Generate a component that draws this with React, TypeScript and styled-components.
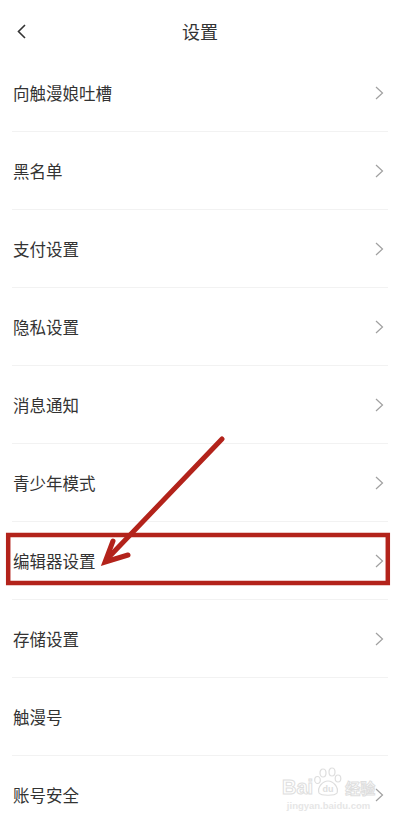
import React from 'react';
import styled, { createGlobalStyle } from 'styled-components';

const GlobalStyle = createGlobalStyle`
  html, body {
    margin: 0;
    padding: 0;
    background: #ffffff;
  }
  body {
    font-family: "Noto Sans CJK SC", "Noto Sans", sans-serif;
    -webkit-font-smoothing: antialiased;
  }
`;

const PageStyled = styled.div`
  position: relative;
  width: 400px;
  height: 824px;
  overflow: hidden;
  background: #ffffff;
`;

const Header = styled.header`
  height: 54px;
  display: grid;
  grid-template-columns: 60px 1fr 60px;
  align-items: start;
  padding-top: 18px;
  box-sizing: border-box;
  .back {
    display: flex;
    padding-left: 17px;
    height: 26px;
    align-items: center;
  }
  h1 {
    margin: 0;
    font-size: 18px;
    line-height: 26px;
    font-weight: 400;
    color: #333333;
    text-align: center;
  }
`;

const List = styled.ul`
  list-style: none;
  margin: 0;
  padding: 0;
`;

const Row = styled.li`
  height: 77px;
  margin: 0 12px;
  padding: 0 4px 0 1px;
  border-bottom: 1px solid #f2f2f2;
  display: flex;
  align-items: center;
  justify-content: space-between;
  span {
    font-size: 16.5px;
    color: #333333;
  }
`;

const Annotation = styled.svg`
  position: absolute;
  inset: 0;
  pointer-events: none;
`;

const Watermark = styled.div`
  position: absolute;
  left: 282px;
  top: 767px;
  display: flex;
  flex-direction: column;
  align-items: center;
  white-space: nowrap;
  .logo {
    display: flex;
    align-items: flex-end;
    font-family: "Liberation Sans", Arial, sans-serif;
    font-size: 20px;
    font-weight: 700;
    line-height: 20px;
    -webkit-text-stroke: 1px #dedede;
    color: #ffffff;
  }
  .cn {
    font-family: "Noto Sans CJK SC", sans-serif;
    font-size: 15px;
    line-height: 18px;
    margin-left: 2px;
  }
  .url {
    margin-top: 3px;
    font-family: "Liberation Sans", Arial, sans-serif;
    font-size: 9.5px;
    font-weight: 700;
    color: #e6e6e6;
  }
`;

const Chevron = () => (
  <svg width="9" height="14" viewBox="0 0 9 14">
    <path d="M1 1 L7.5 7 L1 13" fill="none" stroke="#a0a0a0" strokeWidth="1.2" />
  </svg>
);

const items = [
  { label: '向触漫娘吐槽', arrow: true },
  { label: '黑名单', arrow: true },
  { label: '支付设置', arrow: true },
  { label: '隐私设置', arrow: true },
  { label: '消息通知', arrow: true },
  { label: '青少年模式', arrow: true },
  { label: '编辑器设置', arrow: true },
  { label: '存储设置', arrow: true },
  { label: '触漫号', arrow: false },
  { label: '账号安全', arrow: true },
];

const App = () => {
  return (
    <PageStyled>
      <GlobalStyle />
      <Header>
        <div className="back">
          <svg width="10" height="15" viewBox="0 0 10 15">
            <path d="M8 1 L1.5 7.5 L8 14" fill="none" stroke="#333" strokeWidth="1.6" />
          </svg>
        </div>
        <h1>设置</h1>
        <div />
      </Header>
      <List>
        {items.map((item) => (
          <Row key={item.label}>
            <span>{item.label}</span>
            {item.arrow && <Chevron />}
          </Row>
        ))}
      </List>
      <Annotation width="400" height="824" viewBox="0 0 400 824">
        <rect x="8.2" y="535" width="379.6" height="48" fill="none" stroke="#b3231b" strokeWidth="4.5" />
        <line x1="222" y1="439" x2="108" y2="558" stroke="#b3231b" strokeWidth="5" strokeLinecap="round" />
        <path
          d="M113 541 L105 562 L128 555"
          fill="none"
          stroke="#b3231b"
          strokeWidth="5"
          strokeLinecap="round"
        />
      </Annotation>
      <Watermark>
        <div className="logo">
          <span>Bai</span>
          <svg width="30" height="30" viewBox="0 0 30 30">
            <g fill="none" stroke="#dedede" strokeWidth="1.2">
              <ellipse cx="10" cy="6" rx="3" ry="4" />
              <ellipse cx="19" cy="5" rx="3" ry="4" />
              <ellipse cx="4.5" cy="13" rx="2.8" ry="3.5" />
              <ellipse cx="25" cy="11.5" rx="2.8" ry="3.5" />
              <path d="M6 26 C4 20 10 14 15 14 C20 14 26 20 24 26 C22 29 8 29 6 26 Z" />
            </g>
            <text x="15" y="25" textAnchor="middle" fontSize="9" fontWeight="700" fill="#dedede" fontFamily="Liberation Sans, Arial, sans-serif">du</text>
          </svg>
          <span className="cn">经验</span>
        </div>
        <div className="url">jingyan.baidu.com</div>
      </Watermark>
    </PageStyled>
  );
};

export default App;
